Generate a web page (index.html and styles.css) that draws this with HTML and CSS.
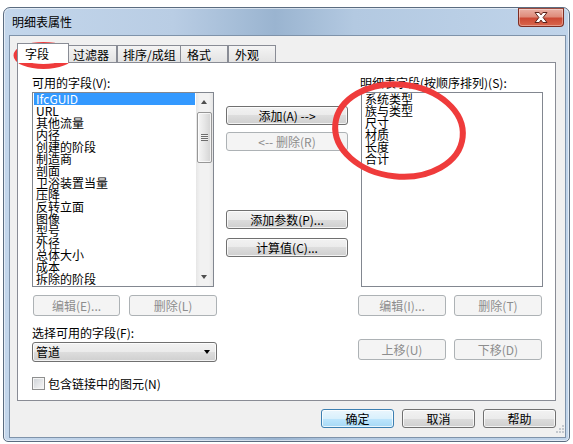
FILE: index.html
```html
<!DOCTYPE html>
<html lang="zh-CN">
<head>
    <meta charset="UTF-8">
    <title>明细表属性</title>
    <link rel="stylesheet" href="styles.css">
</head>
<body>
    <div class="window">
        <div class="titlebar">
            <span class="title">明细表属性</span>
            <div class="close-btn">
                <svg width="44" height="17" viewBox="0 0 44 17">
                    <path d="M16 3.5h4.2l1.8 2.4 1.8-2.4h4.2l-3.9 5 3.9 5h-4.2l-1.8-2.4-1.8 2.4h-4.2l3.9-5z" fill="#fff" stroke="#5a2219" stroke-width="1" stroke-linejoin="round"/>
                </svg>
            </div>
        </div>

        <div class="client">
            <div class="tabs">
                <div class="tab tab-active tab-fields">字段</div>
                <div class="tab tab-filter">过滤器</div>
                <div class="tab tab-sort">排序/成组</div>
                <div class="tab tab-format">格式</div>
                <div class="tab tab-look">外观</div>
            </div>

            <div class="panel">
                <!-- available fields -->
                <div class="col col-left">
                    <div class="label">可用的字段(V):</div>
                    <div class="listbox">
                        <ul class="items">
                            <li class="selected">IfcGUID</li>
                            <li>URL</li>
                            <li>其他流量</li>
                            <li>内径</li>
                            <li>创建的阶段</li>
                            <li>制造商</li>
                            <li>剖面</li>
                            <li>卫浴装置当量</li>
                            <li>压降</li>
                            <li>反转立面</li>
                            <li>图像</li>
                            <li>型号</li>
                            <li>外径</li>
                            <li>总体大小</li>
                            <li>成本</li>
                            <li>拆除的阶段</li>
                        </ul>
                        <div class="scrollbar">
                            <div class="sb-arrow sb-up"></div>
                            <div class="sb-track">
                                <div class="sb-thumb"><span class="grip"></span></div>
                            </div>
                            <div class="sb-arrow sb-down"></div>
                        </div>
                    </div>
                    <div class="btn-row btn-row-left">
                        <button class="btn disabled btn-w87">编辑(E)...</button>
                        <button class="btn disabled btn-w88">删除(L)</button>
                    </div>
                    <div class="label label-select">选择可用的字段(F):</div>
                    <div class="combo">管道</div>
                    <div class="check"><span class="box"></span>包含链接中的图元(N)</div>
                </div>

                <!-- add / remove -->
                <div class="col col-mid">
                    <button class="btn btn-mid">添加(A) --&gt;</button>
                    <button class="btn btn-mid disabled gap-small">&lt;-- 删除(R)</button>
                    <button class="btn btn-mid gap-large">添加参数(P)...</button>
                    <button class="btn btn-mid gap-small2">计算值(C)...</button>
                </div>

                <!-- scheduled fields -->
                <div class="col col-right">
                    <div class="label label-right">明细表字段(按顺序排列)(S):</div>
                    <div class="listbox listbox-right">
                        <ul class="items">
                            <li>系统类型</li>
                            <li>族与类型</li>
                            <li>尺寸</li>
                            <li>材质</li>
                            <li>长度</li>
                            <li>合计</li>
                        </ul>
                    </div>
                    <div class="btn-row">
                        <button class="btn disabled btn-w88">编辑(I)...</button>
                        <button class="btn disabled btn-w88">删除(T)</button>
                    </div>
                    <div class="btn-row btn-row-move">
                        <button class="btn disabled btn-w88">上移(U)</button>
                        <button class="btn disabled btn-w88">下移(D)</button>
                    </div>
                </div>
            </div>

            <div class="footer">
                <button class="btn btn-footer default">确定</button>
                <button class="btn btn-footer">取消</button>
                <button class="btn btn-footer">帮助</button>
                <svg class="grip-corner" width="8" height="9" viewBox="0 0 8 9">
                    <rect x="6" y="0" width="2" height="2" fill="#c3c8ce"/>
                    <rect x="3" y="3" width="2" height="2" fill="#c3c8ce"/>
                    <rect x="6" y="3" width="2" height="2" fill="#c3c8ce"/>
                    <rect x="0" y="6" width="2" height="2" fill="#c3c8ce"/>
                    <rect x="3" y="6" width="2" height="2" fill="#c3c8ce"/>
                    <rect x="6" y="6" width="2" height="2" fill="#c3c8ce"/>
                </svg>
            </div>
        </div>
    </div>

    <!-- hand drawn red marks over the screenshot -->
    <svg class="marks" width="573" height="444" viewBox="0 0 573 444">
        <ellipse cx="43.5" cy="55.5" rx="27.5" ry="11" fill="none" stroke="#ef3b3b" stroke-width="5"/>
        <ellipse cx="399" cy="130.5" rx="64" ry="46" fill="none" stroke="#ef3b3b" stroke-width="6" transform="rotate(6 399 130.5)"/>
    </svg>
</body>
</html>
```

FILE: styles.css
```css
body {
    margin: 0;
    padding: 7px 0 0 3px;
    background: #fff;
    font-family: "Noto Sans CJK SC", "Noto Sans", sans-serif;
    font-size: 12px;
    color: #000;
    position: relative;
}

.window {
    width: 567px;
    height: 435px;
    box-sizing: border-box;
    border: 1px solid #5b6c80;
    border-radius: 7px 7px 5px 5px;
    background: linear-gradient(to right, #c3d6eb 0%, #b9cde4 30%, #9ab4d0 48%, #b3c9e1 62%, #c0d4ea 100%);
    box-shadow: inset 0 0 0 1px rgba(255,255,255,0.55);
    padding: 0 3px 3px 5px;
    display: flex;
    flex-direction: column;
}

.titlebar {
    height: 27px;
    display: flex;
    justify-content: space-between;
    align-items: flex-start;
    padding: 0 2px 0 3px;
}
.title {
    line-height: 28px;
}
.close-btn {
    width: 44px;
    height: 17px;
    border: 1px solid #7e2d22;
    border-top-color: #9a4a3e;
    border-radius: 0 0 4px 4px;
    background: linear-gradient(#eab0a4 0%, #df8c7b 45%, #cc4a35 55%, #d9664c 100%);
    box-shadow: inset 0 0 0 1px rgba(255,255,255,0.35);
}
.close-btn svg {
    display: block;
}

.client {
    flex: 1;
    border: 1px solid #7f93aa;
    background: #f0f0f0;
    display: flex;
    flex-direction: column;
    padding: 7px 9px 0 7px;
}

/* tabs */
.tabs {
    display: flex;
    align-items: flex-end;
    height: 20px;
    position: relative;
    z-index: 1;
}
.tab {
    box-sizing: border-box;
    height: 17px;
    margin-bottom: 1px;
    border: 1px solid #898c95;
    border-bottom: none;
    background: linear-gradient(#f4f4f4, #e3e3e3);
    padding-left: 5px;
    line-height: 17px;
    white-space: nowrap;
}
.tab-active {
    height: 20px;
    margin-bottom: 0;
    background: #fff;
    padding-left: 7px;
    line-height: 20px;
}
.tab-fields { width: 52px; }
.tab-filter { width: 48px; border-left: none; padding-left: 4px; }
.tab-sort { width: 64px; }
.tab-format { width: 47px; border-left: none; padding-left: 6px; }
.tab-look { width: 48px; padding-left: 6px; }

.panel {
    flex: 1;
    margin-top: -1px;
    border: 1px solid #898c95;
    background: #fff;
    display: flex;
    padding: 14px 12px 0 14px;
}

.col {
    display: flex;
    flex-direction: column;
}
.col-left,
.col-right {
    width: 185px;
}
.col-mid {
    width: 122px;
    margin-left: 9px;
    margin-right: 10px;
    padding-top: 29px;
}

.label {
    height: 12px;
    line-height: 12px;
    margin-bottom: 3px;
    white-space: nowrap;
}
.label-right {
    margin-left: 2px;
}
.label-select {
    margin-top: 11px;
}

/* list boxes */
.listbox {
    box-sizing: border-box;
    width: 182px;
    height: 195px;
    border: 1px solid #828790;
    background: #fff;
    display: flex;
    overflow: hidden;
}
.listbox-right {
    margin-left: 3px;
}
.items {
    flex: 1;
    list-style: none;
    margin: 0;
    padding: 0 1px;
    overflow: hidden;
}
.items li {
    height: 12px;
    line-height: 12px;
    padding-left: 2px;
    white-space: nowrap;
}
.items li.selected {
    background: #3399ff;
    color: #fff;
}

.scrollbar {
    width: 17px;
    display: flex;
    flex-direction: column;
    background: linear-gradient(to right, #e6e6e6, #f2f2f2 25%, #f2f2f2 75%, #e6e6e6);
}
.sb-arrow {
    height: 17px;
    position: relative;
}
.sb-arrow::after {
    content: "";
    position: absolute;
    left: 5px;
    top: 7px;
    border-left: 3.5px solid transparent;
    border-right: 3.5px solid transparent;
}
.sb-up::after {
    border-bottom: 4px solid #4f4f4f;
}
.sb-down::after {
    top: 6px;
    border-top: 4px solid #4f4f4f;
}
.sb-track {
    flex: 1;
    padding: 2px 1px 0;
}
.sb-thumb {
    box-sizing: border-box;
    height: 51px;
    border: 1px solid #979797;
    border-radius: 2px;
    background: linear-gradient(to right, #f6f6f6, #e6e6e6 50%, #d3d3d3);
    box-shadow: inset 0 0 0 1px rgba(255,255,255,0.7);
    display: flex;
    align-items: center;
    justify-content: center;
}
.grip {
    width: 7px;
    height: 7px;
    background: repeating-linear-gradient(#6d6d6d 0 1px, #f0f0f0 1px 2px);
}

/* buttons */
.btn {
    box-sizing: border-box;
    height: 19px;
    padding: 0;
    border: 1px solid #707070;
    border-radius: 3px;
    background: linear-gradient(#f2f2f2 0%, #ebebeb 50%, #dddddd 50%, #cfcfcf 100%);
    box-shadow: inset 0 0 0 1px rgba(255,255,255,0.75);
    font-family: inherit;
    font-size: 12px;
    line-height: 17px;
    color: #000;
    text-align: center;
    white-space: nowrap;
}
.btn.disabled {
    border-color: #adb2b5;
    background: #f4f4f4;
    box-shadow: none;
    color: #8d8d8d;
}
.btn.default {
    border-color: #3c7fb1;
    background: linear-gradient(#eaf6fd 0%, #d9f0fc 50%, #bee6fd 50%, #a7d9f5 100%);
}

.btn-mid { width: 122px; }
.gap-small { margin-top: 7px; }
.gap-large { margin-top: 59px; }
.gap-small2 { margin-top: 9px; }

.btn-row {
    display: flex;
    gap: 8px;
    margin-top: 8px;
}
.btn-row .btn {
    height: 21px;
    line-height: 19px;
}
.btn-row-left {
    margin-left: 1px;
    gap: 9px;
}
.btn-row-move {
    margin-top: 23px;
}
.btn-w87 { width: 87px; }
.btn-w88 { width: 88px; }

/* combo and checkbox */
.combo {
    box-sizing: border-box;
    width: 185px;
    height: 20px;
    border: 1px solid #707070;
    border-radius: 3px;
    background: linear-gradient(#f2f2f2 0%, #ebebeb 50%, #dddddd 50%, #cfcfcf 100%);
    box-shadow: inset 0 0 0 1px rgba(255,255,255,0.75);
    padding-left: 3px;
    line-height: 18px;
    position: relative;
}
.combo::after {
    content: "";
    position: absolute;
    right: 6px;
    top: 7px;
    border-left: 3.5px solid transparent;
    border-right: 3.5px solid transparent;
    border-top: 4px solid #000;
}

.check {
    display: flex;
    align-items: center;
    margin-top: 15px;
    height: 13px;
    line-height: 13px;
    white-space: nowrap;
}
.box {
    box-sizing: border-box;
    width: 13px;
    height: 13px;
    margin-right: 3px;
    border: 1px solid #8e8f8f;
    background: linear-gradient(135deg, #cdd1d6, #f8f8f8);
    box-shadow: inset 0 0 0 1px #f4f4f4;
}

/* dialog buttons */
.footer {
    height: 28px;
    margin-top: 8px;
    margin-right: -8px;
    display: flex;
    justify-content: flex-end;
    align-items: flex-start;
    gap: 8px;
}
.btn-footer {
    width: 73px;
}
.grip-corner {
    align-self: flex-end;
    margin-left: -8px;
    margin-bottom: 3px;
}

.marks {
    position: absolute;
    top: 0;
    left: 0;
    pointer-events: none;
}
```
